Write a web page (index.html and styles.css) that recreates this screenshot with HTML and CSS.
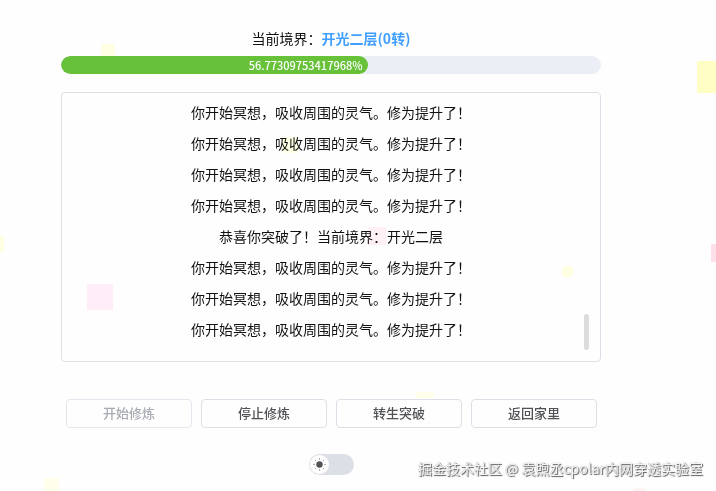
FILE: index.html
```html
<!DOCTYPE html>
<html lang="zh-CN">
<head>
  <meta charset="UTF-8">
  <meta name="viewport" content="width=device-width, initial-scale=1.0">
  <title>修炼</title>
  <link rel="stylesheet" href="styles.css">
</head>
<body>
  <!-- Floating background squares -->
  <div class="particles" aria-hidden="true">
    <span class="particle p1"></span>
    <span class="particle p2"></span>
    <span class="particle p3"></span>
    <span class="particle p4"></span>
    <span class="particle p5"></span>
    <span class="particle p6"></span>
    <span class="particle p7"></span>
    <span class="particle p8"></span>
    <span class="particle p9"></span>
    <span class="particle p10"></span>
    <span class="particle p11"></span>
  </div>

  <main class="container">
    <p class="realm">当前境界：<strong>开光二层(0转)</strong></p>

    <div class="progress" role="progressbar" aria-label="修为" aria-valuemin="0" aria-valuemax="100" aria-valuenow="56.77309753417968">
      <div class="progress-inner" style="width: 56.77309753417968%">56.77309753417968%</div>
    </div>

    <div class="log">
      <ul class="log-list">
        <li>你开始冥想，吸收周围的灵气。修为提升了！</li>
        <li>你开始冥想，吸收周围的灵气。修为提升了！</li>
        <li>你开始冥想，吸收周围的灵气。修为提升了！</li>
        <li>你开始冥想，吸收周围的灵气。修为提升了！</li>
        <li>恭喜你突破了！当前境界：开光二层</li>
        <li>你开始冥想，吸收周围的灵气。修为提升了！</li>
        <li>你开始冥想，吸收周围的灵气。修为提升了！</li>
        <li>你开始冥想，吸收周围的灵气。修为提升了！</li>
      </ul>
      <span class="log-thumb"></span>
    </div>

    <div class="actions">
      <button type="button" disabled>开始修炼</button>
      <button type="button">停止修炼</button>
      <button type="button">转生突破</button>
      <button type="button">返回家里</button>
    </div>

    <label class="switch">
      <input type="checkbox" role="switch" aria-label="深色模式">
      <span class="switch-knob">
        <svg viewBox="0 0 19 19" width="19" height="19">
          <circle cx="9.5" cy="9.5" r="3.2"/>
          <path d="M9.5 3.5v1M9.5 14.5v1M3.5 9.5h1M14.5 9.5h1M5.2 5.2l.6.6M13.2 13.2l.6.6M5.2 13.8l.6-.6M13.2 5.8l.6-.6"/>
        </svg>
      </span>
    </label>
  </main>

  <div class="watermark">掘金技术社区 @ 袁煦丞cpolar内网穿透实验室</div>
</body>
</html>
```

FILE: styles.css
```css
* {
  box-sizing: border-box;
}

body {
  margin: 0;
  font-family: "Noto Sans CJK SC", "Noto Sans", sans-serif;
  font-size: 14px;
  color: #111;
  background-color: #fefefe;
}

.container {
  position: relative;
  padding: 27px 115px 16px 61px;
}

.realm {
  margin: 0 0 7px;
  line-height: 22px;
  text-align: center;
}

.realm strong {
  color: #409eff;
}

/* Progress bar */
.progress {
  height: 18px;
  margin-bottom: 18px;
  border-radius: 9px;
  background-color: #ebeef5;
  overflow: hidden;
}

.progress-inner {
  height: 100%;
  padding-right: 5px;
  border-radius: 9px;
  background-color: #67c23a;
  color: #fff;
  font-size: 11px;
  font-weight: 500;
  line-height: 19px;
  text-align: right;
}

/* Message log */
.log {
  position: relative;
  padding: 4px 12px 16px;
  border: 1px solid #dcdfe6;
  border-radius: 4px;
}

.log-list {
  list-style: none;
  margin: 0;
  padding: 0;
  line-height: 31px;
  text-align: center;
}

.log-thumb {
  position: absolute;
  right: 11px;
  bottom: 11px;
  width: 5px;
  height: 36px;
  border-radius: 3px;
  background-color: #dcdcdd;
}

/* Buttons */
.actions {
  display: grid;
  grid-template-columns: repeat(4, 1fr);
  gap: 9px;
  margin-top: 37px;
  padding: 0 4px 0 5px;
}

.actions button {
  height: 29px;
  padding: 0 0 2px;
  border: 1px solid #dcdfe6;
  border-radius: 4px;
  background-color: transparent;
  color: #505255;
  font-family: inherit;
  font-size: 13px;
  font-weight: 500;
  cursor: pointer;
}

.actions button:disabled {
  border-color: #e4e7ed;
  color: #a8abb2;
  cursor: not-allowed;
}

/* Dark mode switch */
.switch {
  position: relative;
  display: block;
  width: 45px;
  height: 21px;
  margin: 26px auto 0;
}

.switch input {
  appearance: none;
  display: block;
  width: 100%;
  height: 100%;
  margin: 0;
  border-radius: 11px;
  background-color: #dcdfe6;
  cursor: pointer;
}

.switch-knob {
  position: absolute;
  top: 1px;
  left: 1px;
  width: 19px;
  height: 19px;
  border-radius: 50%;
  background-color: #fff;
  pointer-events: none;
}

.switch-knob svg {
  display: block;
  fill: #505255;
  stroke: #606266;
}

.switch-knob circle {
  stroke: none;
}

.watermark {
  position: fixed;
  right: 13px;
  bottom: 12px;
  color: #f4f4f4;
  line-height: 22px;
  text-shadow: 0 0 1px #888, 1px 1px 1px #555;
}

/* Particles */
.particles {
  position: fixed;
  inset: 0;
  overflow: hidden;
}

.particle {
  position: absolute;
  width: 12px;
  height: 12px;
  background-color: #ffffe4;
}

.p1 { left: 101px; top: 44px; width: 14px; height: 14px; }
.p2 { left: 697px; top: 61px; width: 32px; height: 32px; background-color: #ffffc5; }
.p3 { left: 282px; top: 137px; width: 16px; height: 16px; }
.p4 { left: -12px; top: 236px; width: 16px; height: 16px; }
.p5 { left: 368px; top: 227px; width: 18px; height: 18px; background-color: #fff0f6; }
.p6 { left: 87px; top: 284px; width: 26px; height: 26px; background-color: #ffedf8; }
.p7 { left: 711px; top: 244px; width: 18px; height: 18px; background-color: #ffdfec; }
.p8 { left: 562px; top: 266px; width: 11px; height: 11px; border-radius: 4px; }
.p9 { left: 416px; top: 392px; width: 18px; height: 6px; background-color: #ffffea; }
.p10 { left: 44px; top: 478px; width: 15px; height: 15px; background-color: #ffffec; }
.p11 { left: 633px; top: 488px; background-color: #fff4f5; }
```
